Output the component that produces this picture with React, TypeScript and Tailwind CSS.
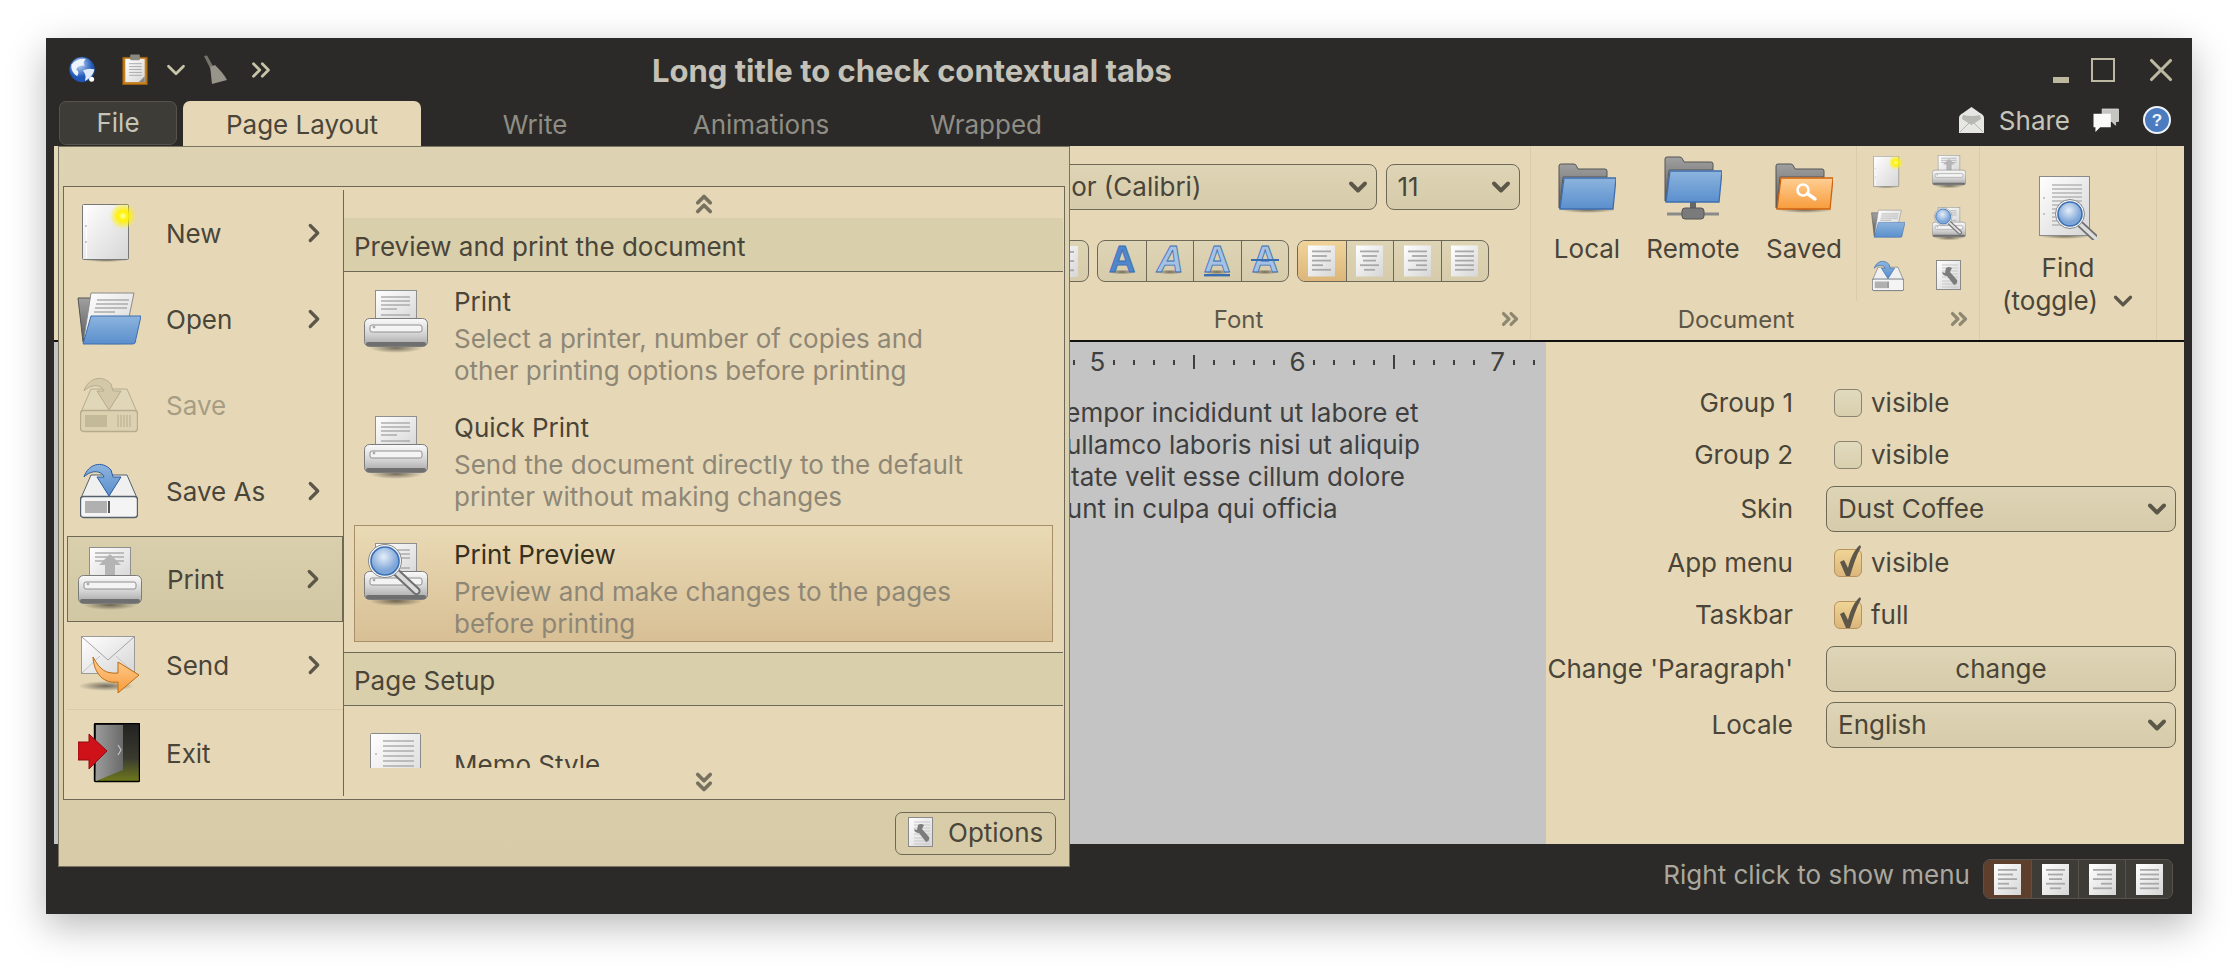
import { ChevronRight, ChevronDown, ChevronsUp, ChevronsDown, ChevronsRight, X } from "lucide-react";
import type { ReactNode } from "react";

type IconProps = { className?: string };

// shared gradients, referenced by id from every icon below
function IconDefs() {
    return (
        <svg className="absolute w-0 h-0">
            <defs>
                <linearGradient id="paper" x1="0" y1="0" x2="1" y2="1">
                    <stop offset="0" stopColor="#ffffff" />
                    <stop offset="1" stopColor="#d6d6d6" />
                </linearGradient>
                <linearGradient id="metal" x1="0" y1="0" x2="0" y2="1">
                    <stop offset="0" stopColor="#fafafa" />
                    <stop offset="0.55" stopColor="#d4d4d4" />
                    <stop offset="1" stopColor="#a4a4a4" />
                </linearGradient>
                <linearGradient id="blue" x1="0" y1="0" x2="0" y2="1">
                    <stop offset="0" stopColor="#8cb4de" />
                    <stop offset="1" stopColor="#5b8fcd" />
                </linearGradient>
                <linearGradient id="orange" x1="0" y1="0" x2="0" y2="1">
                    <stop offset="0" stopColor="#ffcf94" />
                    <stop offset="1" stopColor="#f79c3c" />
                </linearGradient>
                <linearGradient id="gray" x1="0" y1="0" x2="0" y2="1">
                    <stop offset="0" stopColor="#a0a0a0" />
                    <stop offset="1" stopColor="#5c5c5c" />
                </linearGradient>
                <linearGradient id="door" x1="0" y1="0" x2="1" y2="0">
                    <stop offset="0" stopColor="#9b9b9b" />
                    <stop offset="1" stopColor="#6a6a6a" />
                </linearGradient>
                <linearGradient id="exit" x1="0" y1="0" x2="0" y2="1">
                    <stop offset="0" stopColor="#222222" />
                    <stop offset="0.6" stopColor="#3a3a30" />
                    <stop offset="1" stopColor="#6f7a1c" />
                </linearGradient>
                <radialGradient id="shadow">
                    <stop offset="0" stopColor="#000" stopOpacity="0.5" />
                    <stop offset="1" stopColor="#000" stopOpacity="0" />
                </radialGradient>
                <radialGradient id="star">
                    <stop offset="0" stopColor="#ffffb0" />
                    <stop offset="0.35" stopColor="#fff200" />
                    <stop offset="1" stopColor="#fff200" stopOpacity="0" />
                </radialGradient>
                <radialGradient id="glass" cx="0.45" cy="0.35">
                    <stop offset="0" stopColor="#e6eef8" />
                    <stop offset="1" stopColor="#7ea6d8" />
                </radialGradient>
                <radialGradient id="globe" cx="0.4" cy="0.3">
                    <stop offset="0" stopColor="#c4daf6" />
                    <stop offset="1" stopColor="#2259b8" />
                </radialGradient>
            </defs>
        </svg>
    );
}

function Magnifier({ x, y, r }: { x: number; y: number; r: number }) {
    const h = r * 0.72;
    return (
        <g>
            <line x1={x + h} y1={y + h} x2={x + r * 2.1} y2={y + r * 2} stroke="#6f6f6f" strokeWidth={r * 0.55} strokeLinecap="round" />
            <line x1={x + h} y1={y + h} x2={x + r * 2.1} y2={y + r * 2} stroke="#dcdcdc" strokeWidth={r * 0.28} strokeLinecap="round" />
            <circle cx={x} cy={y} r={r + 1.5} fill="#f4f4f4" stroke="#8a8a8a" strokeWidth="1" />
            <circle cx={x} cy={y} r={r - 1} fill="url(#glass)" stroke="#3b6fb4" strokeWidth="1.6" />
        </g>
    );
}

function Printer({ className, kind = "plain" }: IconProps & { kind?: "plain" | "up" | "preview" }) {
    return (
        <svg viewBox="0 0 64 64" className={className}>
            <ellipse cx="32" cy="58" rx="27" ry="5" fill="url(#shadow)" />
            <rect x="11.5" y="0.5" width="41" height="32" fill="url(#paper)" stroke="#8f8f8f" />
            {kind !== "up" && (
                <g stroke="#a2a2a2" strokeWidth="1.3">
                    <line x1="17" y1="7" x2="46" y2="7" />
                    <line x1="17" y1="11" x2="46" y2="11" />
                    <line x1="17" y1="15" x2="46" y2="15" />
                    <line x1="17" y1="19" x2="33" y2="19" />
                    <line x1="17" y1="25" x2="46" y2="25" />
                </g>
            )}
            {kind === "up" && (
                <g>
                    <g stroke="#a2a2a2" strokeWidth="1.3">
                        <line x1="17" y1="6" x2="46" y2="6" />
                        <line x1="17" y1="10" x2="46" y2="10" />
                        <line x1="17" y1="14" x2="46" y2="14" />
                    </g>
                    <path d="M32 7 L43 18 H37 V29 H27 V18 H21 Z" fill="#b4b4b4" />
                </g>
            )}
            <rect x="0.5" y="28.5" width="63" height="28" rx="5" fill="url(#metal)" stroke="#7c7c7c" />
            <rect x="6" y="35" width="52" height="7" rx="2" fill="#f4f4f4" stroke="#909090" />
            <circle cx="10" cy="37" r="1.4" fill="#aaa" />
            <rect x="2" y="52" width="60" height="4" rx="2" fill="#6f6f6f" />
            {kind === "preview" && <Magnifier x={21} y={18} r={15} />}
        </svg>
    );
}

function NewDoc({ className }: IconProps) {
    return (
        <svg viewBox="0 0 54 58" className={className}>
            <ellipse cx="24" cy="56" rx="22" ry="2" fill="url(#shadow)" />
            <rect x="0.5" y="0.5" width="46" height="55" rx="1" fill="url(#paper)" stroke="#777" />
            <line x1="4.5" y1="2" x2="4.5" y2="54" stroke="#ffffff" />
            <circle cx="4" cy="22" r="0.8" fill="#888" />
            <circle cx="4" cy="38" r="0.8" fill="#888" />
            <circle cx="41" cy="12" r="13.5" fill="url(#star)" />
        </svg>
    );
}

function OpenFolder({ className }: IconProps) {
    return (
        <svg viewBox="0 0 64 54" className={className}>
            <ellipse cx="34" cy="50" rx="28" ry="3" fill="url(#shadow)" />
            <path d="M1 6 H14 V46 L6 50 Z" fill="url(#gray)" stroke="#555" />
            <path d="M14 1 H57 L51 30 L7 46 Z" fill="url(#paper)" stroke="#8a8a8a" />
            <g stroke="#9a9a9a" strokeWidth="1.2">
                <line x1="20" y1="8" x2="52" y2="8" />
                <line x1="19" y1="12" x2="51" y2="12" />
                <line x1="18" y1="16" x2="50" y2="16" />
                <line x1="17" y1="20" x2="38" y2="20" />
            </g>
            <path d="M14 24 H64 L58 51 Q57 52 55 52 H6 Z" fill="url(#blue)" stroke="#3e6eaf" />
        </svg>
    );
}

function Drive({ className, disabled }: IconProps & { disabled?: boolean }) {
    const line = disabled ? "#b6ac8d" : "#54606c";
    const body = disabled ? "#dcd2b2" : "#f4f4f4";
    const arrow = disabled ? "#d3c9a9" : "url(#blue)";
    const arrowLine = disabled ? "#b6ac8d" : "#2d5b9e";
    return (
        <svg viewBox="0 0 58 58" className={className}>
            <path d="M11 13 H47 L57 36 H1 Z" fill={disabled ? "#e0d7b8" : "#f0f0f0"} stroke={line} />
            <rect x="0.5" y="34.5" width="57" height="21" rx="3" fill={body} stroke={line} strokeWidth="1.4" />
            <rect x="5" y="39" width="22" height="12" fill={disabled ? "#c3ba9a" : "#b0b0b0"} />
            {disabled ? (
                <g stroke="#b6ac8d">
                    <line x1="38" y1="39" x2="38" y2="51" />
                    <line x1="41" y1="39" x2="41" y2="51" />
                    <line x1="44" y1="39" x2="44" y2="51" />
                    <line x1="47" y1="39" x2="47" y2="51" />
                    <line x1="50" y1="39" x2="50" y2="51" />
                </g>
            ) : (
                <line x1="29" y1="39" x2="29" y2="51" stroke="#111" strokeWidth="1.4" />
            )}
            <path d="M4 15 C8 2 22 -2 31 8 L33 15 H41 L29 34 L17 15 H24 C22 9 12 7 4 15 Z" fill={arrow} stroke={arrowLine} />
        </svg>
    );
}

function Send({ className }: IconProps) {
    return (
        <svg viewBox="0 0 62 58" className={className}>
            <ellipse cx="28" cy="50" rx="28" ry="5" fill="url(#shadow)" />
            <rect x="3.5" y="0.5" width="53" height="37" fill="url(#paper)" stroke="#9a9a9a" />
            <path d="M4 1 L30 24 L56 1" fill="none" stroke="#a4a4a4" />
            <path d="M4 37 L22 20 M56 37 L38 20" stroke="#c4c4c4" />
            <path d="M15 21 C22 34 28 38 40 37 V26 L61 39 L40 57 V46 C26 48 16 38 15 21 Z" fill="url(#orange)" stroke="#bb6c10" />
        </svg>
    );
}

function Exit({ className }: IconProps) {
    return (
        <svg viewBox="0 0 62 60" className={className}>
            <rect x="16.5" y="0.5" width="45" height="58" rx="1" fill="url(#exit)" stroke="#000" strokeWidth="1.4" />
            <path d="M18 2 H45 V47 L18 58 Z" fill="url(#door)" />
            <path d="M40 22 L43 27 L40 32" fill="none" stroke="#c4c4c4" strokeWidth="1.2" />
            <path d="M0 19 H11 V11 L29 28 L11 46 V37 H0 Z" fill="#cf1119" stroke="#8f0c10" />
        </svg>
    );
}

function Memo({ className }: IconProps) {
    return (
        <svg viewBox="0 0 52 64" className={className}>
            <rect x="0.5" y="0.5" width="50" height="62" rx="1" fill="url(#paper)" stroke="#8a8a8a" />
            <g stroke="#a8a8a8" strokeWidth="1.4">
                {[8, 13, 18, 23, 28, 33, 38].map((y) => (
                    <line key={y} x1="13" y1={y} x2="44" y2={y} />
                ))}
                <line x1="13" y1="43" x2="28" y2="43" />
                <line x1="13" y1="50" x2="44" y2="50" />
                <line x1="13" y1="55" x2="44" y2="55" />
            </g>
            <circle cx="6" cy="21" r="0.8" fill="#888" />
            <circle cx="6" cy="41" r="0.8" fill="#888" />
        </svg>
    );
}

function Options({ className }: IconProps) {
    return (
        <svg viewBox="0 0 26 32" className={className}>
            <rect x="0.5" y="0.5" width="24" height="29" fill="url(#paper)" stroke="#8a8a8a" />
            <g stroke="#c8c8c8">
                {[5, 8, 11, 14, 17, 21, 24, 27].map((y) => (
                    <line key={y} x1="6" y1={y} x2="22" y2={y} />
                ))}
            </g>
            <path d="M10 8 Q13 6 16 8 L14 12 L21 20 Q22 24 18 25 L11 16 Q7 16 6 12 L9 13 Z" fill="#7c7c7c" />
        </svg>
    );
}

function FindDoc({ className }: IconProps) {
    return (
        <svg viewBox="0 0 58 64" className={className}>
            <ellipse cx="26" cy="60" rx="26" ry="3" fill="url(#shadow)" />
            <rect x="0.5" y="0.5" width="50" height="59" fill="url(#paper)" stroke="#8a8a8a" />
            <g stroke="#b0b0b0" strokeWidth="1.4">
                {[9, 13, 17, 21, 25, 29, 33, 37, 41, 45, 49].map((y) => (
                    <line key={y} x1="13" y1={y} x2="43" y2={y} />
                ))}
            </g>
            <circle cx="5" cy="22" r="0.8" fill="#888" />
            <circle cx="5" cy="38" r="0.8" fill="#888" />
            <Magnifier x={31} y={38} r={13} />
        </svg>
    );
}

function Folder({ className, tone = "blue" }: IconProps & { tone?: "blue" | "orange" }) {
    const stroke = tone === "blue" ? "#3e6eaf" : "#d0620e";
    return (
        <svg viewBox="0 0 58 50" className={className}>
            <ellipse cx="30" cy="47" rx="28" ry="3" fill="url(#shadow)" />
            <path d="M1 45 V3 Q1 1 3 1 H16 Q18 1 19 4 L20 6 H47 Q49 6 49 8 V14 H5 L2 45 Z" fill="url(#gray)" stroke="#555" />
            <path d="M6 15 H58 L55 46 H2 Z" fill={tone === "blue" ? "url(#blue)" : "url(#orange)"} stroke={stroke} strokeWidth="1.3" />
            {tone === "orange" && (
                <g fill="none" stroke="#fff" strokeLinecap="round">
                    <circle cx="28" cy="27" r="5.5" strokeWidth="2.6" />
                    <line x1="33" y1="31" x2="40" y2="36" strokeWidth="3.4" />
                </g>
            )}
        </svg>
    );
}

function RemoteFolder({ className }: IconProps) {
    return (
        <svg viewBox="0 0 58 64" className={className}>
            <path d="M1 45 V3 Q1 1 3 1 H16 Q18 1 19 4 L20 6 H47 Q49 6 49 8 V14 H5 L2 45 Z" fill="url(#gray)" stroke="#555" />
            <line x1="3" y1="58" x2="55" y2="58" stroke="#8a8a8a" strokeWidth="3" />
            <rect x="26" y="44" width="6" height="8" fill="#666" />
            <rect x="18" y="52" width="22" height="11" rx="3" fill="#7a7a7a" stroke="#555" />
            <path d="M6 15 H58 L55 46 H2 Z" fill="url(#blue)" stroke="#3e6eaf" strokeWidth="1.3" />
        </svg>
    );
}

function AlignDoc({ lines, className }: IconProps & { lines: "left" | "center" | "right" | "justify" }) {
    const widths = [19, 15, 19, 11, 19];
    const rows = lines === "justify" ? [19, 19, 19, 19, 19] : lines === "center" ? [19, 15, 13, 19, 11] : widths;
    return (
        <svg viewBox="0 0 27 31" className={className}>
            <rect x="0" y="0" width="27" height="31" fill="url(#paper)" />
            {rows.map((w, i) => {
                const x = lines === "right" ? 23 - w : lines === "center" ? 13.5 - w / 2 : 4;
                return <rect key={i} x={x} y={5 + i * 4.6} width={w} height="1.8" fill="#a8a8a8" />;
            })}
        </svg>
    );
}

function LetterA({ kind }: { kind: "bold" | "italic" | "under" | "strike" }) {
    return (
        <svg viewBox="0 0 32 32" className="w-[32px] h-[32px]">
            <ellipse cx="16" cy="27" rx="13" ry="2.5" fill="url(#shadow)" />
            <text
                x="16"
                y="27"
                textAnchor="middle"
                fontSize="37"
                fontFamily="Liberation Sans, sans-serif"
                fontWeight={700}
                fontStyle={kind === "italic" ? "italic" : "normal"}
                fill={kind === "bold" ? "#4f86cc" : "#a4c2e6"}
                stroke="#3a6cb0"
                strokeWidth="0.8"
            >
                A
            </text>
            {kind === "under" && <rect x="3" y="29" width="26" height="2.4" fill="#3a6cb0" />}
            {kind === "strike" && <rect x="2" y="14" width="28" height="2" fill="#3a6cb0" />}
        </svg>
    );
}

function Globe() {
    return (
        <svg viewBox="0 0 28 28" className="w-[28px] h-[27px]">
            <circle cx="14" cy="14" r="13" fill="url(#globe)" stroke="#1f4a8f" strokeWidth="0.6" />
            <path d="M3 9 Q9 2 18 3 Q14 7 17 10 Q10 9 8 14 Q12 16 9 21 Q2 16 3 9 Z" fill="#eef4fc" />
            <path d="M15 15 Q21 12 27 14 Q25 22 17 26 Q19 20 15 15 Z" fill="#e2ecf9" />
            <circle cx="24" cy="24" r="2.6" fill="#ffffff" />
        </svg>
    );
}

function Clipboard() {
    return (
        <svg viewBox="0 0 26 32" className="w-[26px] h-[31px]">
            <rect x="0.5" y="3.5" width="25" height="28" fill="#c5801e" stroke="#9c5e10" />
            <rect x="3" y="5" width="20" height="24" fill="url(#paper)" />
            <rect x="8" y="0.5" width="10" height="6" rx="1" fill="#8a8a80" />
            <g stroke="#a8a8a8">
                {[10, 13, 16, 19, 22].map((y) => (
                    <line key={y} x1="7" y1={y} x2="20" y2={y} />
                ))}
            </g>
            <path d="M23 23 V29 H17 Z" fill="#888" />
        </svg>
    );
}

function Broom() {
    return (
        <svg viewBox="0 0 26 30" className="w-[26px] h-[30px]">
            <path d="M2 1 L5 0.5 L11 11 L8 13 Z" fill="#75736a" />
            <path d="M8 12 L13 10 C17 14 22 19 25 25 L10 29 C9 22 9 17 8 12 Z" fill="#97958a" />
        </svg>
    );
}

function Envelope() {
    return (
        <svg viewBox="0 0 25 26" className="w-[25px] h-[26px]">
            <path d="M0 11 Q0 8 4 6 L12.5 0 L21 6 Q25 8 25 11 V26 H0 Z" fill="#e6e6e2" />
            <path d="M3 12 L12.5 18 L22 12 L21 8 Q12.5 10 4 8 Z" fill="#b8b8b2" />
            <path d="M1 25 L10 16 M24 25 L15 16" stroke="#a8a8a2" strokeWidth="0.8" />
        </svg>
    );
}

function Comments() {
    return (
        <svg viewBox="0 0 28 26" className="w-[28px] h-[25px]">
            <path d="M10 1 H27 V14 H24 V18 L20 14 H10 Z" fill="#c4c4c0" stroke="#e8e8e4" strokeWidth="0.7" />
            <path d="M1 6 H19 V20 H8 L3 25 V20 H1 Z" fill="#fafaf8" />
        </svg>
    );
}

function Help() {
    return (
        <svg viewBox="0 0 28 28" className="w-[28px] h-[28px]">
            <circle cx="14" cy="14" r="13" fill="#4c7cc0" stroke="#eef3fa" strokeWidth="2" />
            <text x="14" y="20" textAnchor="middle" fontSize="17" fontWeight="700" fontFamily="Liberation Sans, sans-serif" fill="#eef3fa">
                ?
            </text>
        </svg>
    );
}

const leftItems: { label: string; icon: ReactNode; arrow?: boolean; disabled?: boolean; active?: boolean; sep?: boolean }[] = [
    { label: "New", icon: <NewDoc className="w-[54px] h-[58px]" />, arrow: true },
    { label: "Open", icon: <OpenFolder className="w-[64px] h-[54px]" />, arrow: true },
    { label: "Save", icon: <Drive disabled className="w-[58px] h-[58px]" />, disabled: true },
    { label: "Save As", icon: <Drive className="w-[58px] h-[58px]" />, arrow: true },
    { label: "Print", icon: <Printer kind="up" className="w-[64px] h-[64px]" />, arrow: true, active: true },
    { label: "Send", icon: <Send className="w-[62px] h-[58px]" />, arrow: true },
    { label: "Exit", icon: <Exit className="w-[62px] h-[60px]" />, sep: true },
];

const printItems = [
    { title: "Print", kind: "plain" as const, lines: ["Select a printer, number of copies and", "other printing options before printing"] },
    { title: "Quick Print", kind: "plain" as const, lines: ["Send the document directly to the default", "printer without making changes"] },
    { title: "Print Preview", kind: "preview" as const, lines: ["Preview and make changes to the pages", "before printing"], active: true },
];

function ApplicationMenu() {
    return (
        <div className="absolute left-[12px] top-[108px] w-[1012px] h-[721px] z-10 flex flex-col border border-[#7a7462] bg-gradient-to-b from-[#ddd3b2] to-[#d8cca8]">
            <div className="h-[39px] shrink-0" />
            <div className="mx-[4px] h-[614px] shrink-0 flex border border-[#6e6857] bg-[#e6d8b7] py-[3px]">
                <div className="w-[280px] shrink-0 border-r border-[#6e6857] flex flex-col pl-[3px]">
                    {leftItems.map((item) => (
                        <div
                            key={item.label}
                            className={`flex items-center h-[86px] shrink-0 ${item.active ? "border border-[#6e6857] bg-gradient-to-b from-[#dacfac] to-[#d2c7a3] mt-[2px] h-[85px]" : ""} ${item.sep ? "border-t border-[#d9ccaa] mt-[1px]" : ""}`}
                        >
                            <div className="w-[84px] shrink-0 flex justify-center">{item.icon}</div>
                            <span className={`pl-[15px] pt-[2px] flex-1 ${item.disabled ? "text-[#a79d84]" : "text-[#4a4539]"}`}>{item.label}</span>
                            {item.arrow && <ChevronRight className="w-[30px] h-[30px] mr-[14px] text-[#5c5748]" strokeWidth={2.6} />}
                        </div>
                    ))}
                </div>
                <div className="flex-1 min-w-0 flex flex-col">
                    <div className="h-[28px] shrink-0 flex items-center justify-center">
                        <ChevronsUp className="w-[30px] h-[30px] text-[#77715f]" strokeWidth={3} />
                    </div>
                    <div className="h-[550px] shrink-0 overflow-hidden pr-[1px]">
                        <div className="h-[54px] bg-[#d9cfab] border-b border-[#6e6857] flex items-center pl-[10px] pt-[4px] text-[#4a4539]">Preview and print the document</div>
                        <div className="flex flex-col gap-[9px] pt-[1px] px-[10px]">
                            {printItems.map((item) => (
                                <div
                                    key={item.title}
                                    className={`h-[117px] shrink-0 flex ${item.active ? "px-[9px] border border-[#a98f68] bg-gradient-to-b from-[#e9dab5] to-[#d8bf95] -mb-[1px]" : "px-[10px]"}`}
                                >
                                    <Printer kind={item.kind} className="w-[64px] h-[64px] mt-[17px] shrink-0" />
                                    <div className="pl-[26px] pt-[13px]">
                                        <div className={`leading-[32px] ${item.active ? "text-[#36301f]" : "text-[#4a4539]"}`}>{item.title}</div>
                                        <div className="mt-[5px] leading-[32px] text-[#8e8776]">
                                            {item.lines.map((l) => (
                                                <div key={l}>{l}</div>
                                            ))}
                                        </div>
                                    </div>
                                </div>
                            ))}
                        </div>
                        <div className="mt-[11px] h-[54px] bg-[#d9cfab] border-y border-[#6e6857] flex items-center pl-[10px] pt-[4px] text-[#4a4539]">Page Setup</div>
                        <div className="h-[117px] flex items-center px-[20px]">
                            <div className="w-[64px] shrink-0 flex justify-center">
                                <Memo className="w-[52px] h-[64px]" />
                            </div>
                            <span className="pl-[26px] text-[#4a4539]">Memo Style</span>
                        </div>
                    </div>
                    <div className="h-[28px] shrink-0 flex items-center justify-center">
                        <ChevronsDown className="w-[30px] h-[30px] text-[#77715f]" strokeWidth={3} />
                    </div>
                </div>
            </div>
            <div className="flex-1 flex items-center justify-end pr-[13px]">
                <div className="h-[43px] w-[161px] border border-[#6e6857] rounded-[7px] flex items-center gap-[14px] pl-[12px] text-[#4a4539]">
                    <Options className="w-[26px] h-[32px]" />
                    Options
                </div>
            </div>
        </div>
    );
}

function Select({ value, className, textClass = "pl-[11px]" }: { value: string; className: string; textClass?: string }) {
    return (
        <div className={`h-[46px] flex items-center justify-between border border-[#6e6857] rounded-[8px] bg-gradient-to-b from-[#ded5b6] to-[#d6cbaa] ${className}`}>
            <span className={`text-[#4a4539] whitespace-nowrap ${textClass}`}>{value}</span>
            <ChevronDown className="w-[28px] h-[28px] mr-[4px] text-[#5c5748]" strokeWidth={3.4} />
        </div>
    );
}

function Cells({ children, cellClass = "" }: { children: ReactNode[]; cellClass?: string }) {
    return (
        <div className="flex h-[42px] border border-[#6e6857] rounded-[8px] overflow-hidden bg-gradient-to-b from-[#ded5b6] to-[#d6cbaa]">
            {children.map((c, i) => (
                <div
                    key={i}
                    className={`w-[47.5px] flex items-center justify-center border-l border-[#6e6857] first:border-l-0 ${i === 0 ? cellClass : ""}`}
                >
                    {c}
                </div>
            ))}
        </div>
    );
}

function GroupLabel({ label }: { label: string }) {
    return (
        <div className="flex items-center h-[32px] text-[#5c5748] text-[24px]">
            <span className="flex-1 text-center pt-[2px]">{label}</span>
            <span className="w-[38px] flex justify-center pr-[3px]">
                <ChevronsRight className="w-[26px] h-[26px] text-[#8e8872]" strokeWidth={3} />
            </span>
        </div>
    );
}

function BigButton({ label, icon, className }: { label: string; icon: ReactNode; className: string }) {
    return (
        <div className={`flex flex-col items-center pt-[10px] shrink-0 ${className}`}>
            <div className="h-[64px] flex items-center">{icon}</div>
            <span className="mt-[13px] leading-[32px] text-[#4a4539]">{label}</span>
        </div>
    );
}

function Ribbon() {
    return (
        <div className="h-[196px] shrink-0 flex bg-[#e6d8b7] border-b-[2px] border-[#111]">
            <div className="flex-1" />
            <div className="w-[546px] shrink-0 flex flex-col pt-[18px] border-r border-[#d9ccaa]">
                <div className="flex justify-end gap-[9px] pr-[10px]">
                    <Select value="Minor (Calibri)" className="w-[393px]" textClass="pl-[40px]" />
                    <Select value="11" className="w-[135px]" />
                </div>
                <div className="flex justify-end gap-[8px] pr-[41px] mt-[30px]">
                    <Cells>{[<AlignDoc key="a" lines="left" className="w-[27px] h-[31px]" />]}</Cells>
                    <Cells>
                        {[
                            <LetterA key="b" kind="bold" />,
                            <LetterA key="i" kind="italic" />,
                            <LetterA key="u" kind="under" />,
                            <LetterA key="s" kind="strike" />,
                        ]}
                    </Cells>
                    <Cells cellClass="bg-gradient-to-b from-[#f0d49a] to-[#dcb67a]">
                        {[
                            <AlignDoc key="l" lines="left" className="w-[27px] h-[34px]" />,
                            <AlignDoc key="c" lines="center" className="w-[27px] h-[34px]" />,
                            <AlignDoc key="r" lines="right" className="w-[27px] h-[34px]" />,
                            <AlignDoc key="j" lines="justify" className="w-[27px] h-[34px]" />,
                        ]}
                    </Cells>
                </div>
                <div className="mt-[21px]">
                    <GroupLabel label="Font" />
                </div>
            </div>
            <div className="w-[449px] shrink-0 flex flex-col border-r border-[#d9ccaa]">
                <div className="h-[155px] flex">
                    <div className="w-[326px] flex pl-[10px] border-r border-[#d9ccaa]">
                        <BigButton label="Local" icon={<Folder className="w-[58px] h-[50px]" />} className="w-[92px]" />
                        <BigButton label="Remote" icon={<RemoteFolder className="w-[58px] h-[64px]" />} className="w-[120px]" />
                        <BigButton label="Saved" icon={<Folder tone="orange" className="w-[58px] h-[50px]" />} className="w-[102px]" />
                    </div>
                    <div className="flex-1 grid grid-cols-2 grid-rows-3 h-[156px] justify-items-center items-center">
                        <NewDoc className="w-[30px] h-[32px]" />
                        <Printer kind="up" className="w-[34px] h-[34px]" />
                        <OpenFolder className="w-[34px] h-[30px]" />
                        <Printer kind="preview" className="w-[34px] h-[34px]" />
                        <Drive className="w-[32px] h-[32px]" />
                        <Options className="w-[26px] h-[32px]" />
                    </div>
                </div>
                <div className="mt-[2px]">
                    <GroupLabel label="Document" />
                </div>
            </div>
            <div className="w-[177px] shrink-0 flex flex-col items-center pt-[30px] border-r border-[#d9ccaa] text-[#4a4539] leading-[33px]">
                <FindDoc className="w-[58px] h-[64px]" />
                <span className="pt-[11px]">Find</span>
                <span className="flex items-center gap-[10px] pl-[4px]">
                    (toggle)
                    <ChevronDown className="w-[30px] h-[30px] text-[#5c5748]" strokeWidth={2.6} />
                </span>
            </div>
            <div className="w-[27px] shrink-0" />
        </div>
    );
}

// the ruler only has to be right from inch 4.5 onwards, the rest is under the menu
const rulerCells = Array.from({ length: 30 }, (_, i) => i);

function Ruler() {
    return (
        <div className="h-[40px] flex items-center justify-end pr-[2px]">
            {rulerCells.map((i) => {
                const pos = 29 - i;
                const inch = 7 - (pos - 2 - ((pos - 2) % 10)) / 10;
                return (
                    <div key={i} className="w-[20px] shrink-0 flex justify-center items-center">
                        {pos >= 2 && (pos - 2) % 10 === 0 ? (
                            <span className="text-[26px] leading-none text-[#3f3f3f] pl-[7px]">{inch}</span>
                        ) : (pos - 2) % 5 === 0 ? (
                            <span className="w-[2px] h-[14px] bg-[#3f3f3f]" />
                        ) : (
                            <span className="w-[2px] h-[5px] bg-[#3f3f3f]" />
                        )}
                    </div>
                );
            })}
        </div>
    );
}

const lorem = [
    "Lorem ipsum dolor sit amet, consectetur adipiscing elit, sed do eiusmod tempor incididunt ut labore et",
    "dolore magna aliqua. Ut enim ad minim veniam, quis nostrud exercitation ullamco laboris nisi ut aliquip",
    "ex ea commodo consequat. Duis aute irure dolor in reprehenderit in voluptate velit esse cillum dolore",
    "eu fugiat nulla pariatur. Excepteur sint occaecat cupidatat non proident, sunt in culpa qui officia",
];

function Check({ checked, label }: { checked?: boolean; label: string }) {
    return (
        <div className="flex items-center ml-[8px] gap-[9px] text-[#4a4539]">
            <div
                className={`relative w-[28px] h-[28px] rounded-[6px] border ${checked ? "border-[#b8935e] bg-gradient-to-b from-[#efd595] to-[#dcb67c]" : "border-[#8a8370] bg-gradient-to-b from-[#e2dabd] to-[#d8cfae]"}`}
            >
                {checked && (
                    <svg viewBox="0 0 28 32" className="absolute left-0 -top-[6px] w-[28px] h-[32px]">
                        <path d="M5 18 L9 16 L13 24 C15 15 19 6 25 1 L26 3 C21 12 18 22 15 32 H11 Z" fill="#5c5748" />
                    </svg>
                )}
            </div>
            {label}
        </div>
    );
}

function SidePanel() {
    const label = "text-right text-[#4a4539] whitespace-nowrap";
    return (
        <div className="flex-1 bg-[#e6d8b7] pt-[35px] pr-[8px]">
            <div className="grid grid-cols-[247px_1fr] gap-x-[33px] grid-rows-[52px_52px_56px_52px_52px_56px_56px] items-center">
                <span className={label}>Group 1</span>
                <Check label="visible" />
                <span className={label}>Group 2</span>
                <Check label="visible" />
                <span className={label}>Skin</span>
                <Select value="Dust Coffee" className="w-full" />
                <span className={label}>App menu</span>
                <Check checked label="visible" />
                <span className={label}>Taskbar</span>
                <Check checked label="full" />
                <span className={label}>Change 'Paragraph'</span>
                <div className="h-[46px] flex items-center justify-center border border-[#6e6857] rounded-[8px] bg-gradient-to-b from-[#ded5b6] to-[#d6cbaa] text-[#4a4539]">change</div>
                <span className={label}>Locale</span>
                <Select value="English" className="w-full" />
            </div>
        </div>
    );
}

export default function App() {
    return (
        <div className="w-[2238px] h-[968px] bg-white pt-[38px] pl-[46px] overflow-hidden font-['Inter',sans-serif] text-[26px] leading-[32px]">
            <IconDefs />
            <div className="relative w-[2146px] h-[876px] flex flex-col bg-[#2b2a28] shadow-[0_12px_36px_rgba(0,0,0,0.28)]">
                <div className="h-[63px] shrink-0 flex items-center relative">
                    <div className="flex items-center pl-[22px]">
                        <Globe />
                        <span className="w-[26px]" />
                        <Clipboard />
                        <ChevronDown className="w-[30px] h-[30px] ml-[13px] text-[#c8c4a8]" strokeWidth={2.2} />
                        <span className="w-[11px]" />
                        <Broom />
                        <ChevronsRight className="w-[30px] h-[30px] ml-[18px] text-[#c8c4a8]" strokeWidth={2.2} />
                    </div>
                    <div className="absolute left-[606px] top-[17px] font-bold text-[31px] text-[#c4c2b8] whitespace-nowrap">Long title to check contextual tabs</div>
                    <div className="ml-auto flex items-center pr-[16px] gap-[22px]">
                        <span className="w-[16px] h-[6px] bg-[#bcb9a0] mt-[20px]" />
                        <span className="w-[24px] h-[24px] border-[2px] border-[#bcb9a0]" />
                        <X className="w-[38px] h-[38px] text-[#bcb9a0] ml-[5px] -mr-[4px]" strokeWidth={2} />
                    </div>
                </div>
                <div className="h-[45px] shrink-0 flex items-end relative text-[#8f8d84]">
                    <div className="ml-[13px] w-[118px] h-[44px] mb-[1px] flex items-center justify-center rounded-[7px] border border-[#55534b] bg-[#3d3c37] text-[#c7c5ba]">File</div>
                    <div className="ml-[6px] w-[238px] h-[45px] flex items-center justify-center pt-[2px] rounded-t-[7px] bg-[#e6d8b7] text-[#4a4539]">Page Layout</div>
                    <div className="ml-[30px] w-[168px] h-[45px] flex items-center justify-center pt-[2px]">Write</div>
                    <div className="w-[284px] h-[45px] flex items-center justify-center pt-[2px]">Animations</div>
                    <div className="w-[166px] h-[45px] flex items-center justify-center pt-[2px]">Wrapped</div>
                    <div className="ml-auto mb-[9px] flex items-center pr-[21px] text-[#c7c5ba]">
                        <Envelope />
                        <span className="ml-[15px] pt-[2px]">Share</span>
                        <span className="ml-[22px]"><Comments /></span>
                        <span className="ml-[23px] flex"><Help /></span>
                    </div>
                </div>
                <div className="mx-[8px] flex-1 min-h-0 flex flex-col">
                    <Ribbon />
                    <div className="h-[502px] shrink-0 flex">
                        <div className="w-[1492px] shrink-0 bg-[#c4c4c4] overflow-hidden">
                            <Ruler />
                            <div className="mt-[15px] pl-[114px] text-[#3f3f3f] whitespace-nowrap">
                                {lorem.map((l) => (
                                    <div key={l}>{l}</div>
                                ))}
                            </div>
                        </div>
                        <SidePanel />
                    </div>
                    <div className="flex-1 flex items-center justify-end pr-[11px] -mt-[8px]">
                        <span className="text-[#aaa89e] mr-[13px]">Right click to show menu</span>
                        <div className="flex h-[40px] mt-[8px] rounded-[7px] overflow-hidden border border-[#55534b] bg-[#3d3c37]">
                            {(["left", "center", "right", "justify"] as const).map((a, i) => (
                                <div key={a} className={`w-[47px] flex items-center justify-center ${i === 0 ? "bg-[#5e3f2d]" : "border-l border-[#55534b]"}`}>
                                    <AlignDoc lines={a} className="w-[27px] h-[31px]" />
                                </div>
                            ))}
                        </div>
                    </div>
                </div>
                <ApplicationMenu />
            </div>
        </div>
    );
}
